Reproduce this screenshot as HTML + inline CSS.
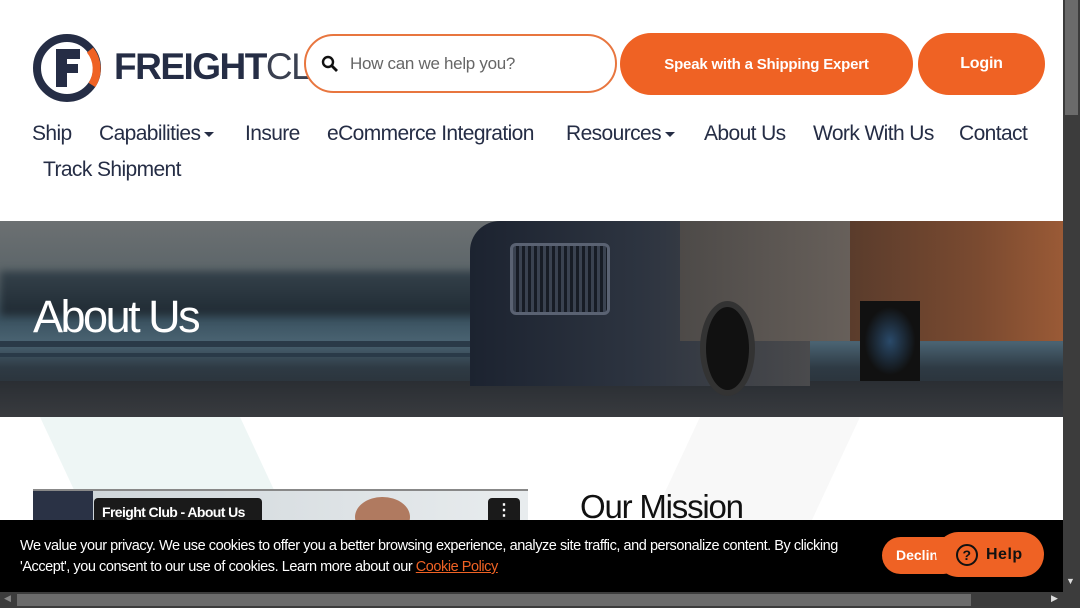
<!DOCTYPE html>
<html><head><meta charset="utf-8"><style>
*{margin:0;padding:0;box-sizing:border-box}
body{width:1080px;height:608px;overflow:hidden;position:relative;background:#fff;font-family:"Liberation Sans",sans-serif;color:#252d45}
.abs{position:absolute}
.nav{font-size:21px;letter-spacing:-0.6px;color:#252d45;top:122px}
.btn{background:#ef6224;color:#fff;border-radius:32px;font-weight:bold;font-size:15px;display:flex;align-items:center;justify-content:center;letter-spacing:-0.2px}
.caret{display:inline-block;width:0;height:0;border-left:5px solid transparent;border-right:5px solid transparent;border-top:5px solid #252d45;vertical-align:middle;margin-left:4px}
</style></head><body>
<!-- bg shapes -->
<div class="abs" style="left:40px;top:417px;width:200px;height:110px;background:#eef6f5;transform:skewX(25deg);transform-origin:top left"></div>
<div class="abs" style="left:700px;top:417px;width:160px;height:110px;background:#f8f8f8;transform:skewX(-25deg);transform-origin:top left"></div>
<!-- logo -->
<svg class="abs" style="left:32px;top:33px" width="72" height="70" viewBox="0 0 72 70">
<circle cx="35" cy="35" r="30" fill="none" stroke="#252d45" stroke-width="8"/>
<path d="M58 17 A30 30 0 0 1 60 52" fill="none" stroke="#ef6224" stroke-width="8"/>
<path d="M24 16h24v10H35v5h11v9H35v14H24z" fill="#252d45"/>
</svg>
<div class="abs" style="left:114px;top:46px;font-size:37px;font-weight:bold;letter-spacing:-1.5px;color:#252d45">FREIGHT<span style="font-weight:normal;color:#3a4050">CL</span></div>
<!-- search -->
<div class="abs" style="left:304px;top:34px;width:313px;height:59px;border:2px solid #e8763f;border-radius:30px;background:#fff">
<svg class="abs" style="left:15px;top:19px" width="18" height="18" viewBox="0 0 18 18"><circle cx="7" cy="7" r="5" fill="none" stroke="#111" stroke-width="2.4"/><path d="M11 11l5 5" stroke="#111" stroke-width="2.8"/></svg>
<div class="abs" style="left:44px;top:18px;font-size:17px;color:#666;letter-spacing:-0.3px">How can we help you?</div>
</div>
<div class="abs btn" style="left:620px;top:33px;width:293px;height:62px">Speak with a Shipping Expert</div>
<div class="abs btn" style="left:918px;top:33px;width:127px;height:62px;font-size:16px">Login</div>
<!-- nav -->
<div class="abs nav" style="left:32px">Ship</div>
<div class="abs nav" style="left:99px">Capabilities<span class="caret"></span></div>
<div class="abs nav" style="left:245px">Insure</div>
<div class="abs nav" style="left:327px">eCommerce Integration</div>
<div class="abs nav" style="left:566px">Resources<span class="caret"></span></div>
<div class="abs nav" style="left:704px">About Us</div>
<div class="abs nav" style="left:813px">Work With Us</div>
<div class="abs nav" style="left:959px">Contact</div>
<div class="abs nav" style="left:43px;top:158px">Track Shipment</div>
<!-- hero -->
<div class="abs" style="left:0;top:221px;width:1063px;height:196px;overflow:hidden;background:linear-gradient(180deg,#6c7072 0%,#5a6468 30%,#3a5260 50%,#4a6372 62%,#2e3a44 75%,#25282c 100%)">
<div class="abs" style="left:0;top:50px;width:520px;height:45px;background:linear-gradient(180deg,#34414a,#1f2a33);filter:blur(4px)"></div>
<div class="abs" style="left:0;top:120px;width:500px;height:6px;background:#2a3a48"></div>
<div class="abs" style="left:0;top:132px;width:500px;height:4px;background:#2a3a48"></div>
<div class="abs" style="left:0;top:160px;width:1063px;height:40px;background:linear-gradient(180deg,#2a2e33,#3a3c40)"></div>
<div class="abs" style="left:470px;top:0;width:340px;height:165px;background:linear-gradient(90deg,#1c2330,#2d3440 50%,#4a4a4c);border-radius:30px 10px 0 0"></div>
<div class="abs" style="left:510px;top:22px;width:100px;height:72px;background:repeating-linear-gradient(90deg,#3a4250 0 3px,#171c25 3px 6px);border:3px solid #5a6272;border-radius:6px"></div>
<div class="abs" style="left:680px;top:0;width:190px;height:120px;background:linear-gradient(90deg,#4d4a48,#6a625c)"></div>
<div class="abs" style="left:850px;top:0;width:213px;height:120px;background:linear-gradient(90deg,#5a3c2c,#7a4a30 60%,#9a5a36)"></div>
<div class="abs" style="left:700px;top:80px;width:55px;height:95px;border-radius:50%;background:#111;border:6px solid #333"></div>
<div class="abs" style="left:860px;top:80px;width:60px;height:80px;background:radial-gradient(#2a4a6a,#111 60%)"></div>
<div class="abs" style="left:33px;top:70px;font-size:45px;color:#fff;letter-spacing:-2.5px">About Us</div>
</div>
<!-- video -->
<div class="abs" style="left:33px;top:489px;width:495px;height:40px;background:linear-gradient(90deg,#2a3245 0 60px,#cfd6da 60px,#e8ecee);border-top:2px solid #888"></div>
<div class="abs" style="left:355px;top:497px;width:55px;height:40px;border-radius:50%;background:#b07a60"></div>
<div class="abs" style="left:94px;top:498px;width:168px;height:30px;background:#1a1a1a;border-radius:4px;color:#fff;font-weight:bold;font-size:14px;letter-spacing:-0.6px;padding:6px 8px;white-space:nowrap">Freight Club - About Us</div>
<div class="abs" style="left:488px;top:498px;width:32px;height:30px;background:#1a1a1a;border-radius:4px;color:#fff;font-weight:bold;text-align:center;font-size:16px;line-height:26px">⋮</div>
<div class="abs" style="left:580px;top:488px;font-size:33px;color:#111;letter-spacing:-1.2px">Our Mission</div>
<!-- cookie bar -->
<div class="abs" style="left:0;top:520px;width:1063px;height:72px;background:#000"></div>
<div class="abs" style="left:20px;top:536px;width:860px;font-size:14.5px;line-height:21px;color:#fff;letter-spacing:-0.45px">We value your privacy. We use cookies to offer you a better browsing experience, analyze site traffic, and personalize content. By clicking 'Accept', you consent to our use of cookies. Learn more about our <span style="color:#ef6224;text-decoration:underline">Cookie Policy</span></div>
<div class="abs" style="left:882px;top:537px;width:80px;height:37px;background:#ef6224;border-radius:19px;color:#fff;font-weight:bold;font-size:14px;padding:10px 14px;overflow:hidden">Decline</div>
<div class="abs" style="left:936px;top:532px;width:108px;height:45px;background:#ef6224;border-radius:23px;color:#111;font-weight:bold;font-size:16px;display:flex;align-items:center;padding-left:20px;gap:8px;letter-spacing:0.5px"><span style="width:22px;height:22px;border:2px solid #111;border-radius:50%;display:inline-flex;align-items:center;justify-content:center;font-size:14px">?</span>Help</div>
<!-- scrollbars -->
<div class="abs" style="left:1063px;top:0;width:17px;height:608px;background:#3c3c3c"></div>
<div class="abs" style="left:1065px;top:0;width:13px;height:115px;background:#6b6b6b"></div>
<div class="abs" style="left:1066px;top:576px;font-size:9px;color:#ddd">▼</div>
<div class="abs" style="left:0;top:592px;width:1063px;height:16px;background:#3c3c3c"></div>
<div class="abs" style="left:17px;top:594px;width:954px;height:12px;background:#6b6b6b"></div>
<div class="abs" style="left:1051px;top:593px;font-size:9px;color:#ddd">▶</div>
<div class="abs" style="left:4px;top:593px;font-size:9px;color:#888">◀</div>
</body></html>
